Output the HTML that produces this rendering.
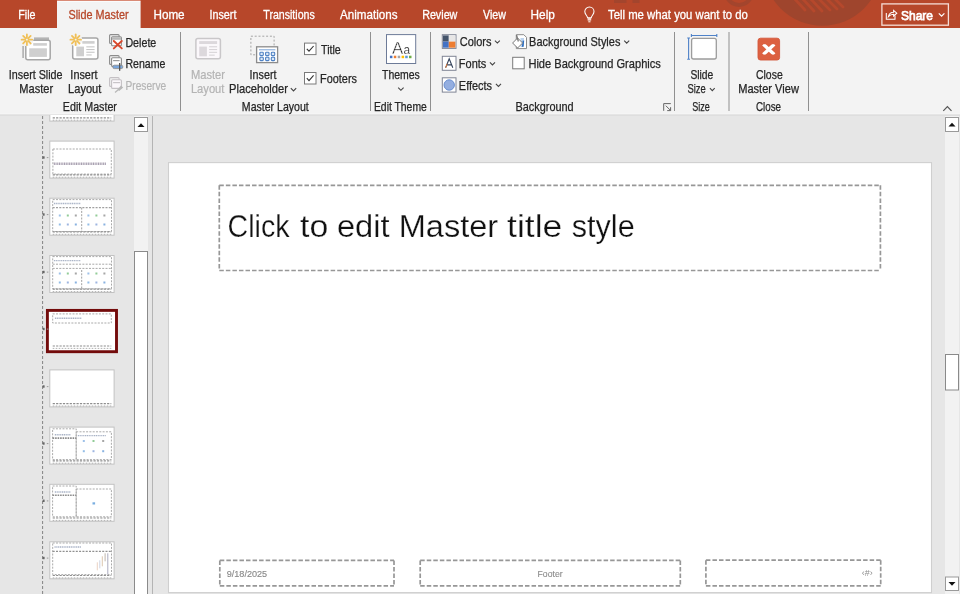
<!DOCTYPE html>
<html><head><meta charset="utf-8">
<style>
*{margin:0;padding:0;box-sizing:border-box}
html,body{width:960px;height:594px;overflow:hidden;background:#e6e6e6;font-family:"Liberation Sans",sans-serif}
svg{position:absolute;left:0;top:0;will-change:transform}
text{font-family:"Liberation Sans",sans-serif;white-space:pre}
</style></head><body>
<svg width="960" height="594" viewBox="0 0 960 594">
<defs><clipPath id="tc"><rect x="0" y="115" width="134" height="479"/></clipPath></defs>

<rect x="0" y="0" width="960" height="28" fill="#b7472a"/>
<circle cx="822.3" cy="-33.3" r="59" fill="#9f452d"/>
<circle cx="739" cy="-8" r="13" fill="none" stroke="#a3452d" stroke-width="4"/>
<g stroke="#b5482c" stroke-width="2.8" stroke-linecap="round">
  <line x1="792" y1="-4" x2="805" y2="10"/>
  <line x1="800" y1="-4" x2="814" y2="11"/>
  <line x1="808" y1="-4" x2="822" y2="11"/>
  <line x1="816" y1="-4" x2="830" y2="10"/>
  <line x1="824" y1="-4" x2="837" y2="9"/>
  <line x1="832" y1="-4" x2="843" y2="7"/>
</g>
<g fill="#a3452d"><rect x="614" y="0" width="12.5" height="3"/><rect x="632.5" y="0" width="7" height="3"/></g>
<rect x="57" y="0" width="83.6" height="1" fill="#d98a76"/><rect x="57" y="1" width="83.6" height="28" fill="#f3f3f3"/><rect x="57.5" y="1" width="82.6" height="1" fill="#fbfbfb"/>
<rect x="0" y="28" width="960" height="86" fill="#f3f3f3"/>
<rect x="0" y="113.5" width="960" height="1" fill="#f8f8f8"/>
<rect x="0" y="114.5" width="960" height="1.3" fill="#dcdcdc"/>
<g fill="#909090">
  <rect x="180" y="32" width="1" height="79"/>
  <rect x="370" y="32" width="1" height="79"/>
  <rect x="430" y="32" width="1" height="79"/>
  <rect x="674" y="32" width="1" height="79"/>
  <rect x="728.5" y="32" width="1" height="79"/>
  <rect x="808" y="32" width="1" height="79"/>
</g>
<!-- left scrollbar -->
<rect x="134" y="116" width="14" height="478" fill="#f2f2f2"/>
<rect x="134.5" y="117.5" width="13" height="14" fill="#fff" stroke="#9a9a9a" stroke-width="1"/>
<path d="M137.5 127 L141 123.2 L144.5 127 Z" fill="#111"/>
<rect x="134.5" y="251.5" width="13" height="350" fill="#fff" stroke="#8a8a8a" stroke-width="1"/>
<rect x="152" y="116" width="1" height="478" fill="#b4b4b4"/>
<!-- slide -->
<rect x="168.5" y="162.6" width="763" height="430" fill="#fff" stroke="#cfcfcf" stroke-width="1.1"/>
<!-- right scrollbar -->
<rect x="945" y="116" width="14" height="478" fill="#f2f2f2"/>
<rect x="945.5" y="117.5" width="13" height="14" fill="#fff" stroke="#9a9a9a" stroke-width="1"/>
<path d="M948.5 126.6 L952 122.8 L955.5 126.6 Z" fill="#111"/>
<rect x="945.5" y="354.5" width="13" height="35.5" fill="#fff" stroke="#8a8a8a" stroke-width="1"/>
<rect x="945.5" y="577" width="13" height="13.5" fill="#fff" stroke="#9a9a9a" stroke-width="1"/>
<path d="M948.5 582 L952 585.8 L955.5 582 Z" fill="#111"/>
<!-- slide placeholders -->
<line x1="219.3" y1="185.3" x2="880.4" y2="185.3" stroke="#979797" stroke-width="1.7" stroke-dasharray="4.5 2.05"/><line x1="219.3" y1="185.3" x2="219.3" y2="270.5" stroke="#979797" stroke-width="1.7" stroke-dasharray="4.5 2.05"/><line x1="880.4" y1="185.3" x2="880.4" y2="270.5" stroke="#979797" stroke-width="1.7" stroke-dasharray="4.5 2.05"/><line x1="219.3" y1="270.5" x2="880.4" y2="270.5" stroke="#979797" stroke-width="1.7" stroke-dasharray="4.5 2.05"/><line x1="219.8" y1="560.4" x2="394" y2="560.4" stroke="#979797" stroke-width="1.7" stroke-dasharray="4.5 2.05"/><line x1="219.8" y1="560.4" x2="219.8" y2="585.8" stroke="#979797" stroke-width="1.7" stroke-dasharray="4.5 2.05"/><line x1="394" y1="560.4" x2="394" y2="585.8" stroke="#979797" stroke-width="1.7" stroke-dasharray="4.5 2.05"/><line x1="219.8" y1="585.8" x2="394" y2="585.8" stroke="#979797" stroke-width="1.7" stroke-dasharray="4.5 2.05"/><line x1="420.2" y1="560.4" x2="680.3" y2="560.4" stroke="#979797" stroke-width="1.7" stroke-dasharray="4.5 2.05"/><line x1="420.2" y1="560.4" x2="420.2" y2="585.9" stroke="#979797" stroke-width="1.7" stroke-dasharray="4.5 2.05"/><line x1="680.3" y1="560.4" x2="680.3" y2="585.9" stroke="#979797" stroke-width="1.7" stroke-dasharray="4.5 2.05"/><line x1="420.2" y1="585.9" x2="680.3" y2="585.9" stroke="#979797" stroke-width="1.7" stroke-dasharray="4.5 2.05"/><line x1="705.9" y1="560.2" x2="880.7" y2="560.2" stroke="#979797" stroke-width="1.7" stroke-dasharray="4.5 2.05"/><line x1="705.9" y1="560.2" x2="705.9" y2="585.9" stroke="#979797" stroke-width="1.7" stroke-dasharray="4.5 2.05"/><line x1="880.7" y1="560.2" x2="880.7" y2="585.9" stroke="#979797" stroke-width="1.7" stroke-dasharray="4.5 2.05"/><line x1="705.9" y1="585.9" x2="880.7" y2="585.9" stroke="#979797" stroke-width="1.7" stroke-dasharray="4.5 2.05"/>

<g clip-path="url(#tc)"><rect x="49.80" y="84.10" width="64.30" height="37.00" fill="#fff" stroke="#c2c2c2" stroke-width="1"/><line x1="52.70" y1="117.80" x2="111.30" y2="117.80" stroke="#8e8e8e" stroke-width="1.2" stroke-dasharray="2.2 1.2"/><line x1="52.70" y1="120.20" x2="111.30" y2="120.20" stroke="#a8a8a8" stroke-width="0.9" stroke-dasharray="1.6 1.4"/>
<rect x="49.80" y="141.10" width="64.30" height="37.00" fill="#fff" stroke="#c2c2c2" stroke-width="1"/><rect x="52.90" y="149.00" width="58.40" height="25.10" fill="none" stroke="#a0a0a0" stroke-width="0.9" stroke-dasharray="2 1.3"/><line x1="53.8" y1="163.79999999999998" x2="106.3" y2="163.79999999999998" stroke="#a8a0b0" stroke-width="2.4" stroke-dasharray="1.1 0.6"/><line x1="52.70" y1="174.80" x2="111.30" y2="174.80" stroke="#8e8e8e" stroke-width="1.2" stroke-dasharray="2.2 1.2"/><line x1="52.70" y1="177.20" x2="111.30" y2="177.20" stroke="#a8a8a8" stroke-width="0.9" stroke-dasharray="1.6 1.4"/>
<rect x="49.80" y="198.20" width="64.30" height="37.00" fill="#fff" stroke="#c2c2c2" stroke-width="1"/><rect x="52.70" y="199.60" width="58.80" height="31.90" fill="none" stroke="#a0a0a0" stroke-width="0.9" stroke-dasharray="2 1.3"/><line x1="53.90" y1="203.50" x2="80.90" y2="203.50" stroke="#a9b3c6" stroke-width="1.4" stroke-dasharray="1.2 0.6"/><line x1="52.70" y1="207.60" x2="111.50" y2="207.60" stroke="#a0a0a0" stroke-width="1.1" stroke-dasharray="2 1.3"/><line x1="81.70" y1="207.60" x2="81.70" y2="231.50" stroke="#a0a0a0" stroke-width="1" stroke-dasharray="2 1.3"/><rect x="58.80" y="214.50" width="2" height="2" fill="#6aa0dc" opacity="0.65"/><rect x="66.80" y="214.50" width="2" height="2" fill="#58b060" opacity="0.65"/><rect x="74.80" y="214.50" width="2" height="2" fill="#777" opacity="0.65"/><rect x="58.80" y="223.50" width="2" height="2" fill="#5a9ad8" opacity="0.65"/><rect x="66.80" y="223.50" width="2" height="2" fill="#6a8ed0" opacity="0.65"/><rect x="74.80" y="223.50" width="2" height="2" fill="#4a88d0" opacity="0.65"/><rect x="87.40" y="214.50" width="2" height="2" fill="#6aa0dc" opacity="0.65"/><rect x="95.40" y="214.50" width="2" height="2" fill="#58b060" opacity="0.65"/><rect x="103.40" y="214.50" width="2" height="2" fill="#777" opacity="0.65"/><rect x="87.40" y="223.50" width="2" height="2" fill="#5a9ad8" opacity="0.65"/><rect x="95.40" y="223.50" width="2" height="2" fill="#6a8ed0" opacity="0.65"/><rect x="103.40" y="223.50" width="2" height="2" fill="#4a88d0" opacity="0.65"/><line x1="52.70" y1="231.90" x2="111.30" y2="231.90" stroke="#8e8e8e" stroke-width="1.2" stroke-dasharray="2.2 1.2"/><line x1="52.70" y1="234.30" x2="111.30" y2="234.30" stroke="#a8a8a8" stroke-width="0.9" stroke-dasharray="1.6 1.4"/>
<rect x="49.80" y="255.50" width="64.30" height="37.00" fill="#fff" stroke="#c2c2c2" stroke-width="1"/><rect x="52.70" y="256.60" width="58.80" height="32.20" fill="none" stroke="#a0a0a0" stroke-width="0.9" stroke-dasharray="2 1.3"/><line x1="53.90" y1="260.60" x2="80.90" y2="260.60" stroke="#a9b3c6" stroke-width="1.4" stroke-dasharray="1.2 0.6"/><line x1="52.70" y1="264.20" x2="111.50" y2="264.20" stroke="#a8a8a8" stroke-width="1" stroke-dasharray="2 1.3"/><line x1="52.70" y1="268.40" x2="111.50" y2="268.40" stroke="#a8a8a8" stroke-width="1" stroke-dasharray="2 1.3"/><line x1="81.70" y1="270.00" x2="81.70" y2="288.80" stroke="#a0a0a0" stroke-width="1" stroke-dasharray="2 1.3"/><rect x="58.80" y="272.50" width="2" height="2" fill="#6aa0dc" opacity="0.65"/><rect x="66.80" y="272.50" width="2" height="2" fill="#58b060" opacity="0.65"/><rect x="74.80" y="272.50" width="2" height="2" fill="#777" opacity="0.65"/><rect x="58.80" y="281.50" width="2" height="2" fill="#5a9ad8" opacity="0.65"/><rect x="66.80" y="281.50" width="2" height="2" fill="#6a8ed0" opacity="0.65"/><rect x="74.80" y="281.50" width="2" height="2" fill="#4a88d0" opacity="0.65"/><rect x="87.40" y="272.50" width="2" height="2" fill="#6aa0dc" opacity="0.65"/><rect x="95.40" y="272.50" width="2" height="2" fill="#58b060" opacity="0.65"/><rect x="103.40" y="272.50" width="2" height="2" fill="#777" opacity="0.65"/><rect x="87.40" y="281.50" width="2" height="2" fill="#5a9ad8" opacity="0.65"/><rect x="95.40" y="281.50" width="2" height="2" fill="#6a8ed0" opacity="0.65"/><rect x="103.40" y="281.50" width="2" height="2" fill="#4a88d0" opacity="0.65"/><line x1="52.70" y1="289.20" x2="111.30" y2="289.20" stroke="#8e8e8e" stroke-width="1.2" stroke-dasharray="2.2 1.2"/><line x1="52.70" y1="291.60" x2="111.30" y2="291.60" stroke="#a8a8a8" stroke-width="0.9" stroke-dasharray="1.6 1.4"/>
<rect x="47.4" y="310.4" width="69.1" height="41.3" fill="#fff" stroke="#730b0b" stroke-width="2.9"/><rect x="52.70" y="313.90" width="58.60" height="9.10" fill="none" stroke="#a0a0a0" stroke-width="0.9" stroke-dasharray="2 1.3"/><line x1="54.90" y1="318.20" x2="81.90" y2="318.20" stroke="#a9b3c6" stroke-width="1.4" stroke-dasharray="1.2 0.6"/><line x1="52.70" y1="346.00" x2="111.30" y2="346.00" stroke="#8e8e8e" stroke-width="1.2" stroke-dasharray="2.2 1.2"/><line x1="52.70" y1="348.40" x2="111.30" y2="348.40" stroke="#a8a8a8" stroke-width="0.9" stroke-dasharray="1.6 1.4"/>
<rect x="49.80" y="369.90" width="64.30" height="37.00" fill="#fff" stroke="#c2c2c2" stroke-width="1"/><line x1="52.70" y1="403.60" x2="111.30" y2="403.60" stroke="#8e8e8e" stroke-width="1.2" stroke-dasharray="2.2 1.2"/><line x1="52.70" y1="406.00" x2="111.30" y2="406.00" stroke="#a8a8a8" stroke-width="0.9" stroke-dasharray="1.6 1.4"/>
<rect x="49.80" y="427.10" width="64.30" height="37.00" fill="#fff" stroke="#c2c2c2" stroke-width="1"/><rect x="52.60" y="428.80" width="23.60" height="30.80" fill="none" stroke="#a0a0a0" stroke-width="0.9" stroke-dasharray="2 1.3"/><line x1="52.60" y1="438.10" x2="76.20" y2="438.10" stroke="#8a8a8a" stroke-width="1.6" stroke-dasharray="1.6 0.9"/><line x1="54.80" y1="434.80" x2="70.80" y2="434.80" stroke="#a9b3c6" stroke-width="1.4" stroke-dasharray="1.2 0.6"/><rect x="76.20" y="431.80" width="35.20" height="27.80" fill="none" stroke="#a0a0a0" stroke-width="0.9" stroke-dasharray="2 1.3"/><line x1="77.80" y1="435.60" x2="105.80" y2="435.60" stroke="#a9b3c6" stroke-width="1.4" stroke-dasharray="1.2 0.6"/><rect x="82.80" y="440.00" width="2" height="2" fill="#6aa0dc" opacity="0.65"/><rect x="92.50" y="440.00" width="2" height="2" fill="#58b060" opacity="0.65"/><rect x="102.20" y="440.00" width="2" height="2" fill="#777" opacity="0.65"/><rect x="82.80" y="450.20" width="2" height="2" fill="#5a9ad8" opacity="0.65"/><rect x="92.50" y="450.20" width="2" height="2" fill="#6a8ed0" opacity="0.65"/><rect x="102.20" y="450.20" width="2" height="2" fill="#4a88d0" opacity="0.65"/><line x1="52.70" y1="460.80" x2="111.30" y2="460.80" stroke="#8e8e8e" stroke-width="1.2" stroke-dasharray="2.2 1.2"/><line x1="52.70" y1="463.20" x2="111.30" y2="463.20" stroke="#a8a8a8" stroke-width="0.9" stroke-dasharray="1.6 1.4"/>
<rect x="49.80" y="484.30" width="64.30" height="37.00" fill="#fff" stroke="#c2c2c2" stroke-width="1"/><rect x="52.60" y="486.00" width="23.60" height="30.80" fill="none" stroke="#a0a0a0" stroke-width="0.9" stroke-dasharray="2 1.3"/><line x1="52.60" y1="495.30" x2="76.20" y2="495.30" stroke="#8a8a8a" stroke-width="1.6" stroke-dasharray="1.6 0.9"/><line x1="54.80" y1="492.00" x2="70.80" y2="492.00" stroke="#a9b3c6" stroke-width="1.4" stroke-dasharray="1.2 0.6"/><rect x="76.20" y="489.00" width="35.20" height="27.80" fill="none" stroke="#a0a0a0" stroke-width="0.9" stroke-dasharray="2 1.3"/><rect x="92.5" y="502.3" width="2.6" height="2.2" fill="#7aaee0"/><line x1="52.70" y1="518.00" x2="111.30" y2="518.00" stroke="#8e8e8e" stroke-width="1.2" stroke-dasharray="2.2 1.2"/><line x1="52.70" y1="520.40" x2="111.30" y2="520.40" stroke="#a8a8a8" stroke-width="0.9" stroke-dasharray="1.6 1.4"/>
<rect x="49.80" y="541.80" width="64.30" height="37.00" fill="#fff" stroke="#c2c2c2" stroke-width="1"/><rect x="52.70" y="543.00" width="58.80" height="31.60" fill="none" stroke="#a0a0a0" stroke-width="0.9" stroke-dasharray="2 1.3"/><line x1="54.50" y1="547.00" x2="81.50" y2="547.00" stroke="#a9b3c6" stroke-width="1.4" stroke-dasharray="1.2 0.6"/><line x1="52.70" y1="551.30" x2="111.50" y2="551.30" stroke="#909090" stroke-width="1.2" stroke-dasharray="2 1.3"/><g stroke-width="0.9" opacity="0.7"><line x1="107.8" y1="553.3" x2="107.8" y2="574.3" stroke="#7a7a9a"/><line x1="105.1" y1="553.3" x2="105.1" y2="561.3" stroke="#9a8a7a"/><line x1="102.3" y1="556.3" x2="102.3" y2="566.3" stroke="#c8a880"/><line x1="99.8" y1="560.3" x2="99.8" y2="568.3" stroke="#b0b8d0"/><line x1="97.3" y1="562.3" x2="97.3" y2="570.3" stroke="#e0b8a0"/></g><line x1="52.70" y1="575.50" x2="111.30" y2="575.50" stroke="#8e8e8e" stroke-width="1.2" stroke-dasharray="2.2 1.2"/><line x1="52.70" y1="577.90" x2="111.30" y2="577.90" stroke="#a8a8a8" stroke-width="0.9" stroke-dasharray="1.6 1.4"/>
<line x1="42.6" y1="116" x2="42.6" y2="594" stroke="#6a6a6a" stroke-width="0.8" stroke-dasharray="3 2"/>
<rect x="42.6" y="156.3" width="2" height="2.4" fill="#666"/><rect x="46.8" y="157.1" width="1.6" height="1" fill="#999"/>
<rect x="42.6" y="213.3" width="2" height="2.4" fill="#666"/><rect x="46.8" y="214.1" width="1.6" height="1" fill="#999"/>
<rect x="42.6" y="270.8" width="2" height="2.4" fill="#666"/><rect x="46.8" y="271.6" width="1.6" height="1" fill="#999"/>
<rect x="42.6" y="327.8" width="2" height="2.4" fill="#666"/><rect x="46.8" y="328.6" width="1.6" height="1" fill="#999"/>
<rect x="42.6" y="385.3" width="2" height="2.4" fill="#666"/><rect x="46.8" y="386.1" width="1.6" height="1" fill="#999"/>
<rect x="42.6" y="442.3" width="2" height="2.4" fill="#666"/><rect x="46.8" y="443.1" width="1.6" height="1" fill="#999"/>
<rect x="42.6" y="499.6" width="2" height="2.4" fill="#666"/><rect x="46.8" y="500.40000000000003" width="1.6" height="1" fill="#999"/>
<rect x="42.6" y="556.8" width="2" height="2.4" fill="#666"/><rect x="46.8" y="557.6" width="1.6" height="1" fill="#999"/></g>

<rect x="22.3" y="46" width="1.6" height="12" fill="#b0b0b0"/>
<rect x="34" y="37.4" width="15" height="3.2" fill="#b4b4b4"/>
<rect x="25.8" y="40.2" width="24.4" height="19.6" rx="2" fill="#fff" stroke="#a6a6a6" stroke-width="1.5"/>
<rect x="33.2" y="43.1" width="13.7" height="2.6" fill="#cfcfcf"/>
<rect x="29.2" y="48.3" width="17.7" height="8.6" fill="#cfcfcf"/>
<circle cx="26.9" cy="39.7" r="6.5" fill="#f3f3f3"/>

<g stroke="#f0c058" stroke-width="1.8" stroke-linecap="round"><line x1="28.70" y1="39.70" x2="32.20" y2="39.70"/><line x1="28.17" y1="40.97" x2="30.65" y2="43.45"/><line x1="26.90" y1="41.50" x2="26.90" y2="45.00"/><line x1="25.63" y1="40.97" x2="23.15" y2="43.45"/><line x1="25.10" y1="39.70" x2="21.60" y2="39.70"/><line x1="25.63" y1="38.43" x2="23.15" y2="35.95"/><line x1="26.90" y1="37.90" x2="26.90" y2="34.40"/><line x1="28.17" y1="38.43" x2="30.65" y2="35.95"/></g>

<rect x="72.7" y="38.1" width="25.2" height="20.8" rx="2" fill="#fff" stroke="#a6a6a6" stroke-width="1.5"/>
<rect x="82.3" y="41.1" width="12.3" height="2.6" fill="#cfcfcf"/>
<rect x="76.3" y="46.6" width="7.7" height="9.7" fill="#cfcfcf"/>
<g fill="#c8c8c8"><rect x="86.3" y="46.3" width="8.3" height="1.1"/><rect x="86.3" y="49" width="8.3" height="1.1"/><rect x="86.3" y="51.7" width="8.3" height="1.1"/><rect x="86.3" y="54.4" width="5.4" height="1.1"/></g>
<circle cx="75.7" cy="39.7" r="6.5" fill="#f3f3f3"/>

<g stroke="#f0c058" stroke-width="1.8" stroke-linecap="round"><line x1="77.50" y1="39.70" x2="81.00" y2="39.70"/><line x1="76.97" y1="40.97" x2="79.45" y2="43.45"/><line x1="75.70" y1="41.50" x2="75.70" y2="45.00"/><line x1="74.43" y1="40.97" x2="71.95" y2="43.45"/><line x1="73.90" y1="39.70" x2="70.40" y2="39.70"/><line x1="74.43" y1="38.43" x2="71.95" y2="35.95"/><line x1="75.70" y1="37.90" x2="75.70" y2="34.40"/><line x1="76.97" y1="38.43" x2="79.45" y2="35.95"/></g>

<g fill="none" stroke="#8c8c8c" stroke-width="1.1">
<rect x="109.6" y="34.6" width="9.5" height="8.8" rx="1"/>
</g>
<rect x="111.6" y="36.7" width="9.8" height="9" rx="1" fill="#fff" stroke="#8c8c8c" stroke-width="1.1"/>
<rect x="112" y="37.2" width="9" height="2.6" fill="#b8b8b8"/>
<g stroke="#d9482c" stroke-width="1.9" stroke-linecap="round"><line x1="113.8" y1="41" x2="121.8" y2="48.4"/><line x1="121.8" y1="41" x2="113.8" y2="48.4"/></g>


<rect x="109.6" y="55.6" width="9.5" height="8.8" rx="1" fill="none" stroke="#8c8c8c" stroke-width="1.1"/>
<rect x="111.6" y="57.8" width="9.8" height="8.6" rx="1" fill="#fff" stroke="#8c8c8c" stroke-width="1.1"/>
<rect x="113.1" y="60" width="6.5" height="1.2" fill="#9a9a9a"/>
<rect x="112.8" y="65.2" width="10" height="3.4" rx="1.5" fill="#7aa6dc" stroke="#8a8a8a" stroke-width="0.8"/>
<rect x="119" y="63" width="1.3" height="7.8" fill="#555"/>


<rect x="109.6" y="77.6" width="9.5" height="8.8" rx="1" fill="none" stroke="#c4c0c4" stroke-width="1.1"/>
<rect x="111.6" y="79.8" width="9.8" height="8.6" rx="1" fill="#fbf7fb" stroke="#c4c0c4" stroke-width="1.1"/>
<rect x="113.1" y="82" width="7" height="1.2" fill="#c8c4c8"/>
<path d="M117.5 89.5 L121 85.5 L123.2 87.5 L119.2 91 Z" fill="#b8b8b8"/>
<line x1="115" y1="92.5" x2="118.5" y2="89.5" stroke="#b8b8b8" stroke-width="1.2"/>


<rect x="195.9" y="38.5" width="24.5" height="20.2" rx="2" fill="#fbf8fb" stroke="#c9c7c9" stroke-width="1.5"/>
<rect x="199.2" y="41.1" width="17.9" height="2.9" fill="#dcd8dc"/>
<rect x="199.2" y="46.6" width="7.7" height="9.7" fill="#dcd8dc"/>
<g fill="#d8d4d8"><rect x="209.1" y="46.2" width="8" height="1.1"/><rect x="209.1" y="49" width="8" height="1.1"/><rect x="209.1" y="51.8" width="8" height="1.1"/><rect x="209.1" y="54.6" width="5.6" height="1.1"/></g>


<rect x="250.9" y="36.2" width="23.2" height="18.6" fill="none" stroke="#a4a4a4" stroke-width="1" stroke-dasharray="2 1.8"/>
<rect x="256.6" y="46.8" width="21" height="15.8" fill="#fff" stroke="#8c8c8c" stroke-width="1.3"/>
<rect x="259" y="49.3" width="16.4" height="1" fill="#7aa3d6"/>
<g fill="#dce8f6" stroke="#4f82c4" stroke-width="1.1">
<rect x="259.9" y="52.3" width="3.4" height="3.3" rx="0.8"/><rect x="265.6" y="52.3" width="3.4" height="3.3" rx="0.8"/><rect x="271.3" y="52.3" width="3.4" height="3.3" rx="0.8"/>
<rect x="259.9" y="57.3" width="3.4" height="3.3" rx="0.8"/><rect x="265.6" y="57.3" width="3.4" height="3.3" rx="0.8"/><rect x="271.3" y="57.3" width="3.4" height="3.3" rx="0.8"/>
</g>

<rect x="304.5" y="43.1" width="11.5" height="11.5" fill="#fff" stroke="#7a7a7a" stroke-width="1"/><path d="M306.8 48.800000000000004 L309 51.2 L313.6 46.0" fill="none" stroke="#333" stroke-width="1.1"/>
<rect x="304.5" y="72.5" width="11.5" height="11.5" fill="#fff" stroke="#7a7a7a" stroke-width="1"/><path d="M306.8 78.2 L309 80.6 L313.6 75.4" fill="none" stroke="#333" stroke-width="1.1"/>
<rect x="512.7" y="57.3" width="11.5" height="11.5" fill="#fff" stroke="#7a7a7a" stroke-width="1"/>

<rect x="386.5" y="34.6" width="29.2" height="28.9" fill="#fff" stroke="#6d7b98" stroke-width="1"/>
<text x="391.9" y="53.6" font-size="17.2" fill="#222" stroke="#fff" stroke-width="0.45" font-family="Liberation Sans" textLength="11.2" lengthAdjust="spacingAndGlyphs">A</text>
<text x="403.6" y="53.6" font-size="12.6" fill="#222" stroke="#fff" stroke-width="0.2" font-family="Liberation Sans" textLength="6.6" lengthAdjust="spacingAndGlyphs">a</text>
<g><rect x="389.9" y="55.7" width="2.5" height="2.5" fill="#4472c4"/><rect x="393.8" y="55.7" width="2.5" height="2.5" fill="#ed7d31"/><rect x="397.7" y="55.7" width="2.5" height="2.5" fill="#a5a5a5"/><rect x="401.6" y="55.7" width="2.5" height="2.5" fill="#ffc000"/><rect x="405.2" y="55.7" width="2.5" height="2.5" fill="#5b9bd5"/><rect x="409" y="55.7" width="2.5" height="2.5" fill="#70ad47"/></g>

<path d="M398.2 87.6 L400.9 90.3 L403.59999999999997 87.6" fill="none" stroke="#444" stroke-width="1.1"/>
<path d="M494.9 40.6 L497.34999999999997 43.050000000000004 L499.79999999999995 40.6" fill="none" stroke="#444" stroke-width="1.1"/>
<path d="M489.9 62.3 L492.45 64.85 L495.0 62.3" fill="none" stroke="#444" stroke-width="1.1"/>
<path d="M495.9 83.8 L498.45 86.35 L501.0 83.8" fill="none" stroke="#444" stroke-width="1.1"/>
<path d="M624.2 40.6 L626.7 43.1 L629.2 40.6" fill="none" stroke="#444" stroke-width="1.1"/>
<path d="M290.8 88.2 L293.5 90.9 L296.2 88.2" fill="none" stroke="#444" stroke-width="1.1"/>
<path d="M709.9 88.2 L712.3 90.60000000000001 L714.6999999999999 88.2" fill="none" stroke="#444" stroke-width="1.1"/>

<rect x="442.3" y="34.7" width="13.7" height="13.7" fill="#fff" stroke="#7f8494" stroke-width="1"/>
<rect x="443" y="35.4" width="5.8" height="6.2" fill="#44546a"/>
<rect x="448.8" y="35.4" width="6.5" height="6.2" fill="#e7e6e6"/>
<rect x="443" y="41.6" width="5.8" height="6.1" fill="#4472c4"/>
<rect x="448.8" y="41.6" width="6.5" height="6.1" fill="#ed7d31"/>


<rect x="442.3" y="56.3" width="13.7" height="14" fill="#fff" stroke="#7f8494" stroke-width="1"/>
<path d="M445.6 67.8 L449.2 58.8 L452.8 67.8 M446.8 64.9 L451.6 64.9" fill="none" stroke="#35445c" stroke-width="1.1"/>
<path d="M445.6 67.8 L447.2 63.8" fill="none" stroke="#ed7d31" stroke-width="0.9"/>


<rect x="442.3" y="77.8" width="13.7" height="14.3" fill="#fff" stroke="#7f8494" stroke-width="1"/>
<circle cx="449.2" cy="85" r="5.2" fill="#94aee0" stroke="#6b8fd0" stroke-width="1"/>


<path d="M516.3 34.7 L523.8 34.7 L526.5 37.4 L526.5 48.6 L516.3 48.6 Z" fill="#fff" stroke="#8a8a8a" stroke-width="1"/>
<rect x="520.5" y="38" width="3.5" height="9" fill="#bcd3ee"/>
<path d="M522.6 40.8 L524.2 40.5 L523.6 46.5 L521.8 47 Z" fill="#2e6fc0"/>
<path d="M512.6 43 L517.6 38 L522.6 43 L517.6 48 Z" fill="#fff" stroke="#7a7a7a" stroke-width="1"/>
<path d="M516.5 35 L518.4 41.5" stroke="#7a7a7a" stroke-width="1.3"/>


<path d="M663.7 110.8 L663.7 103.6 L670.8 103.6" fill="none" stroke="#666" stroke-width="1"/>
<path d="M665.8 105.7 L670.5 110.4 M670.6 107.2 L670.6 110.6 L667.2 110.6" fill="none" stroke="#666" stroke-width="1"/>


<rect x="691.6" y="38.4" width="24.7" height="20.6" rx="2" fill="#fff" stroke="#9c9c9c" stroke-width="1.3"/>
<path d="M691.4 35.5 L716.8 35.5 M691.4 34 L691.4 37 M716.8 34 L716.8 37" stroke="#4f82c8" stroke-width="1.1"/>
<path d="M688.6 38 L688.6 59.3 M687.2 38 L690 38 M687.2 59.3 L690 59.3" stroke="#4f82c8" stroke-width="1.1"/>


<rect x="758" y="38.2" width="21.6" height="21.8" rx="2.5" fill="#dc6040" stroke="#d4573a" stroke-width="0.9"/>
<path d="M763.3 44.3 L774.3 54.5 M774.3 44.3 L763.3 54.5" stroke="#fff" stroke-width="3.3"/><rect x="760" y="41.6" width="18" height="2.6" fill="#dc6040"/><rect x="760" y="54.6" width="18" height="2.6" fill="#dc6040"/>

<path d="M943.3 110.8 L947.4 106.6 L951.5 110.8" fill="none" stroke="#555" stroke-width="1.2"/>

<path d="M587.6 17.8 C587.2 15.6 584.8 14.4 584.8 11.6 A4.6 4.6 0 0 1 594 11.6 C594 14.4 591.6 15.6 591.2 17.8 Z" fill="none" stroke="#fff" stroke-width="1.05"/>
<rect x="587.6" y="18" width="3.6" height="2.6" fill="#f4d8d0"/>
<rect x="588.3" y="20.8" width="2.2" height="1.6" fill="#f0c8bb"/>


<rect x="881.9" y="3.9" width="66.5" height="21.3" fill="none" stroke="#f6ddd6" stroke-width="1.3"/>
<path d="M886.3 13 L886.3 19.3 L895 19.3 L895 15.5" fill="none" stroke="#fff" stroke-width="1.05"/>
<path d="M888.4 16.6 C889 13.6 891 12.2 893.6 12.2 L893.6 10.4 L896.8 13.2 L893.6 16 L893.6 14.2 C891.4 14.2 889.8 15 888.4 16.6 Z" fill="none" stroke="#fff" stroke-width="1.05"/>

<path d="M938.8 13.4 L941.5999999999999 16.2 L944.4 13.4" fill="none" stroke="#fff" stroke-width="1.2"/>
<text x="18.33" y="18.70" font-size="12.3" fill="#fff" textLength="17.23" lengthAdjust="spacingAndGlyphs" stroke="#fff" stroke-width="0.3">File</text>
<text x="68.50" y="18.70" font-size="12.3" fill="#b7472a" textLength="60.08" lengthAdjust="spacingAndGlyphs" stroke="#b7472a" stroke-width="0.3">Slide Master</text>
<text x="153.45" y="18.70" font-size="12.3" fill="#fff" textLength="31.20" lengthAdjust="spacingAndGlyphs" stroke="#fff" stroke-width="0.3">Home</text>
<text x="209.53" y="18.70" font-size="12.3" fill="#fff" textLength="26.86" lengthAdjust="spacingAndGlyphs" stroke="#fff" stroke-width="0.3">Insert</text>
<text x="263.30" y="18.70" font-size="12.3" fill="#fff" textLength="51.43" lengthAdjust="spacingAndGlyphs" stroke="#fff" stroke-width="0.3">Transitions</text>
<text x="340.00" y="18.70" font-size="12.3" fill="#fff" textLength="57.54" lengthAdjust="spacingAndGlyphs" stroke="#fff" stroke-width="0.3">Animations</text>
<text x="422.13" y="18.70" font-size="12.3" fill="#fff" textLength="35.27" lengthAdjust="spacingAndGlyphs" stroke="#fff" stroke-width="0.3">Review</text>
<text x="483.00" y="18.70" font-size="12.3" fill="#fff" textLength="22.90" lengthAdjust="spacingAndGlyphs" stroke="#fff" stroke-width="0.3">View</text>
<text x="530.54" y="18.70" font-size="12.3" fill="#fff" textLength="24.31" lengthAdjust="spacingAndGlyphs" stroke="#fff" stroke-width="0.3">Help</text>
<text x="608.00" y="18.50" font-size="12.3" fill="#fff" textLength="139.85" lengthAdjust="spacingAndGlyphs" stroke="#fff" stroke-width="0.3">Tell me what you want to do</text>
<text x="901.00" y="19.50" font-size="13.2" fill="#fff" textLength="32.00" lengthAdjust="spacingAndGlyphs" stroke="#fff" stroke-width="0.75">Share</text>
<text x="8.87" y="78.50" font-size="12.2" fill="#262626" textLength="53.69" lengthAdjust="spacingAndGlyphs" stroke="#262626" stroke-width="0.25">Insert Slide</text>
<text x="19.34" y="93.25" font-size="12.2" fill="#262626" textLength="33.81" lengthAdjust="spacingAndGlyphs" stroke="#262626" stroke-width="0.25">Master</text>
<text x="70.36" y="78.50" font-size="12.2" fill="#262626" textLength="27.19" lengthAdjust="spacingAndGlyphs" stroke="#262626" stroke-width="0.25">Insert</text>
<text x="68.09" y="93.25" font-size="12.2" fill="#262626" textLength="33.25" lengthAdjust="spacingAndGlyphs" stroke="#262626" stroke-width="0.25">Layout</text>
<text x="62.87" y="111.20" font-size="12.2" fill="#262626" textLength="54.08" lengthAdjust="spacingAndGlyphs" stroke="#262626" stroke-width="0.25">Edit Master</text>
<text x="125.42" y="46.80" font-size="12.2" fill="#262626" textLength="30.88" lengthAdjust="spacingAndGlyphs" stroke="#262626" stroke-width="0.25">Delete</text>
<text x="125.43" y="68.30" font-size="12.2" fill="#262626" textLength="39.98" lengthAdjust="spacingAndGlyphs" stroke="#262626" stroke-width="0.25">Rename</text>
<text x="125.46" y="90.20" font-size="12.2" fill="#b4b4b4" textLength="40.75" lengthAdjust="spacingAndGlyphs" stroke="#b4b4b4" stroke-width="0.2">Preserve</text>
<text x="190.88" y="78.50" font-size="12.2" fill="#b4b4b4" textLength="34.17" lengthAdjust="spacingAndGlyphs" stroke="#b4b4b4" stroke-width="0.2">Master</text>
<text x="190.88" y="93.25" font-size="12.2" fill="#b4b4b4" textLength="33.55" lengthAdjust="spacingAndGlyphs" stroke="#b4b4b4" stroke-width="0.2">Layout</text>
<text x="249.62" y="78.50" font-size="12.2" fill="#262626" textLength="26.84" lengthAdjust="spacingAndGlyphs" stroke="#262626" stroke-width="0.25">Insert</text>
<text x="229.09" y="93.25" font-size="12.2" fill="#262626" textLength="58.87" lengthAdjust="spacingAndGlyphs" stroke="#262626" stroke-width="0.25">Placeholder</text>
<text x="241.83" y="111.20" font-size="12.2" fill="#262626" textLength="66.93" lengthAdjust="spacingAndGlyphs" stroke="#262626" stroke-width="0.25">Master Layout</text>
<text x="321.00" y="53.80" font-size="12.2" fill="#262626" textLength="19.81" lengthAdjust="spacingAndGlyphs" stroke="#262626" stroke-width="0.25">Title</text>
<text x="320.11" y="83.00" font-size="12.2" fill="#262626" textLength="36.88" lengthAdjust="spacingAndGlyphs" stroke="#262626" stroke-width="0.25">Footers</text>
<text x="382.00" y="78.50" font-size="12.2" fill="#262626" textLength="37.78" lengthAdjust="spacingAndGlyphs" stroke="#262626" stroke-width="0.25">Themes</text>
<text x="373.95" y="111.20" font-size="12.2" fill="#262626" textLength="52.86" lengthAdjust="spacingAndGlyphs" stroke="#262626" stroke-width="0.25">Edit Theme</text>
<text x="459.75" y="46.30" font-size="12.2" fill="#262626" textLength="31.73" lengthAdjust="spacingAndGlyphs" stroke="#262626" stroke-width="0.25">Colors</text>
<text x="458.85" y="67.80" font-size="12.2" fill="#262626" textLength="27.43" lengthAdjust="spacingAndGlyphs" stroke="#262626" stroke-width="0.25">Fonts</text>
<text x="458.85" y="89.50" font-size="12.2" fill="#262626" textLength="33.23" lengthAdjust="spacingAndGlyphs" stroke="#262626" stroke-width="0.25">Effects</text>
<text x="529.10" y="46.30" font-size="12.2" fill="#262626" textLength="91.28" lengthAdjust="spacingAndGlyphs" stroke="#262626" stroke-width="0.25">Background Styles</text>
<text x="528.39" y="67.80" font-size="12.2" fill="#262626" textLength="132.49" lengthAdjust="spacingAndGlyphs" stroke="#262626" stroke-width="0.25">Hide Background Graphics</text>
<text x="515.51" y="111.20" font-size="12.2" fill="#262626" textLength="58.19" lengthAdjust="spacingAndGlyphs" stroke="#262626" stroke-width="0.25">Background</text>
<text x="690.40" y="78.50" font-size="12.2" fill="#262626" textLength="22.91" lengthAdjust="spacingAndGlyphs" stroke="#262626" stroke-width="0.25">Slide</text>
<text x="687.50" y="93.25" font-size="12.2" fill="#262626" textLength="18.33" lengthAdjust="spacingAndGlyphs" stroke="#262626" stroke-width="0.25">Size</text>
<text x="692.25" y="111.20" font-size="12.2" fill="#262626" textLength="17.59" lengthAdjust="spacingAndGlyphs" stroke="#262626" stroke-width="0.25">Size</text>
<text x="756.00" y="78.50" font-size="12.2" fill="#262626" textLength="26.71" lengthAdjust="spacingAndGlyphs" stroke="#262626" stroke-width="0.25">Close</text>
<text x="738.19" y="93.25" font-size="12.2" fill="#262626" textLength="60.73" lengthAdjust="spacingAndGlyphs" stroke="#262626" stroke-width="0.25">Master View</text>
<text x="756.00" y="111.20" font-size="12.2" fill="#262626" textLength="25.07" lengthAdjust="spacingAndGlyphs" stroke="#262626" stroke-width="0.25">Close</text>
<text x="227.58" y="236.60" font-size="31" fill="#111" textLength="61.96" lengthAdjust="spacingAndGlyphs" stroke="#fff" stroke-width="0.25">Click</text>
<text x="300.00" y="236.60" font-size="31" fill="#111" textLength="28.26" lengthAdjust="spacingAndGlyphs" stroke="#fff" stroke-width="0.25">to</text>
<text x="336.95" y="236.60" font-size="31" fill="#111" textLength="52.65" lengthAdjust="spacingAndGlyphs" stroke="#fff" stroke-width="0.25">edit</text>
<text x="398.70" y="236.60" font-size="31" fill="#111" textLength="99.54" lengthAdjust="spacingAndGlyphs" stroke="#fff" stroke-width="0.25">Master</text>
<text x="507.10" y="236.60" font-size="31" fill="#111" textLength="55.12" lengthAdjust="spacingAndGlyphs" stroke="#fff" stroke-width="0.25">title</text>
<text x="571.70" y="236.60" font-size="31" fill="#111" textLength="63.03" lengthAdjust="spacingAndGlyphs" stroke="#fff" stroke-width="0.25">style</text>
<text x="226.70" y="577.20" font-size="9.8" fill="#8a8a8a" textLength="40.49" lengthAdjust="spacingAndGlyphs" stroke="#8a8a8a" stroke-width="0.15">9/18/2025</text>
<text x="537.50" y="576.80" font-size="9.5" fill="#8a8a8a" textLength="25.15" lengthAdjust="spacingAndGlyphs" stroke="#8a8a8a" stroke-width="0.1">Footer</text>
<text x="861.80" y="576.30" font-size="9" fill="#8c8c8c" textLength="10.90" lengthAdjust="spacingAndGlyphs" >‹#›</text>
</svg>
</body></html>
